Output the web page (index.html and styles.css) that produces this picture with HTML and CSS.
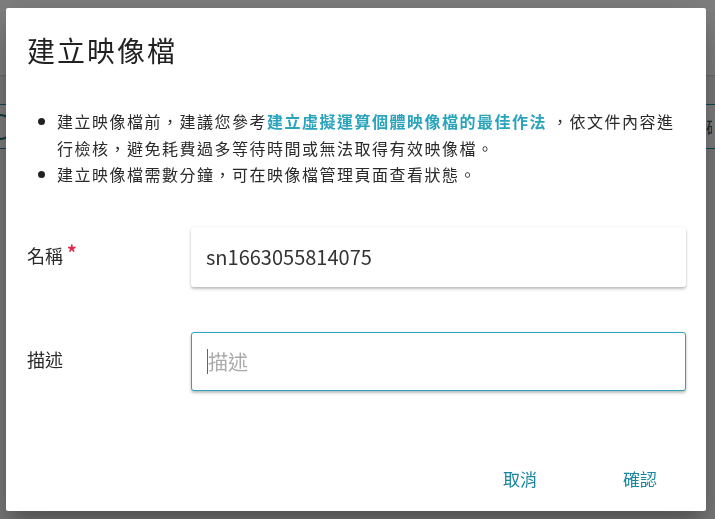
FILE: index.html
```html
<!DOCTYPE html>
<html lang="zh-Hant">
  <head>
    <meta charset="UTF-8">
    <title>建立映像檔</title>
    <link rel="stylesheet" href="styles.css">
  </head>
  <body>
    <div class="page">
      <div class="page-header"></div>
      <div class="page-search">
        <span class="search-icon"></span>
        <span class="search-action">確認</span>
      </div>
    </div>

    <div class="overlay"></div>

    <div class="dialog">
      <h2 class="dialog-title">建立映像檔</h2>

      <div class="dialog-body">
        <ul class="notes">
          <li>建立映像檔前，建議您參考<a href="#" class="notes-link">建立虛擬運算個體映像檔的最佳作法</a> ，依文件內容進行檢核，避免耗費過多等待時間或無法取得有效映像檔。</li>
          <li>建立映像檔需數分鐘，可在映像檔管理頁面查看狀態。</li>
        </ul>

        <form class="form">
          <div class="form-row">
            <label for="imageName" class="form-label">名稱 <span class="required">*</span></label>
            <input type="text" id="imageName" class="form-input" value="sn1663055814075">
          </div>
          <div class="form-row">
            <label for="imageDesc" class="form-label">描述</label>
            <div class="form-input form-input-focus">
              <span class="caret"></span><span class="placeholder">描述</span>
            </div>
          </div>
        </form>
      </div>

      <div class="dialog-actions">
        <button type="button" class="btn">取消</button>
        <button type="button" class="btn">確認</button>
      </div>
    </div>
  </body>
</html>
```

FILE: styles.css
```css
body {
  margin: 0;
  padding: 0;
  background-color: #f4f4f4;
  font-family: "Noto Sans CJK TC", "Noto Sans", sans-serif;
  color: #333;
  overflow: hidden;
}

.page {
  height: 519px;
}

.page-header {
  height: 75px;
  background-color: #fff;
  border-bottom: 1px solid #d8d8d8;
}

.page-search {
  margin-top: 28px;
  height: 43px;
  border-top: 1px solid #1d8fa8;
  border-bottom: 1px solid #1d8fa8;
  background-color: #fff;
  display: flex;
  align-items: center;
  justify-content: space-between;
  overflow: hidden;
}

.search-icon {
  width: 22px;
  height: 22px;
  margin-left: -13px;
  border: 2px solid #1d6f80;
  border-radius: 50%;
}

.search-action {
  width: 6px;
  overflow: hidden;
  white-space: nowrap;
  margin-right: 3px;
  font-size: 17px;
  color: #1a5d6d;
}

.overlay {
  position: fixed;
  top: 0;
  left: 0;
  right: 0;
  bottom: 0;
  background-color: rgba(0, 0, 0, 0.5);
}

.dialog {
  position: fixed;
  left: 6px;
  top: 8px;
  width: 700px;
  height: 503px;
  background-color: #fff;
  border-radius: 2px;
  box-shadow: 0 11px 15px -7px rgba(0,0,0,0.2), 0 24px 38px 3px rgba(0,0,0,0.14), 0 9px 46px 8px rgba(0,0,0,0.12);
  display: flex;
  flex-direction: column;
  box-sizing: border-box;
}

.dialog-title {
  margin: 0;
  padding: 22px 21px 0;
  font-size: 28px;
  line-height: 40px;
  font-weight: normal;
  color: #212121;
  letter-spacing: 2px;
}

.dialog-body {
  padding: 0 20px 0 21px;
}

.notes {
  margin: 38px 0 0;
  padding-left: 30px;
  list-style: none;
  font-size: 16px;
  line-height: 26.5px;
  letter-spacing: 1.5px;
  color: #2a2a2a;
}

.notes li {
  position: relative;
}

.notes li::before {
  content: "";
  position: absolute;
  left: -19px;
  top: 10px;
  width: 7px;
  height: 7px;
  border-radius: 50%;
  background-color: #222;
}

.notes-link {
  color: #2aa3bd;
  font-weight: bold;
  text-decoration: none;
}

.form {
  margin-top: 39px;
  display: flex;
  flex-direction: column;
  gap: 45px;
}

.form-row {
  display: flex;
  align-items: center;
}

.form-label {
  width: 164px;
  flex-shrink: 0;
  font-size: 18px;
  line-height: 24px;
  margin-top: -4px;
  color: #2a2a2a;
}

.required {
  color: #e0284a;
  font-size: 19px;
  font-weight: bold;
  line-height: 18px;
  vertical-align: top;
}

.form-input {
  flex: 1;
  height: 60px;
  box-sizing: border-box;
  border: none;
  border-radius: 3px;
  padding: 0 15px;
  font-family: "Noto Sans CJK TC", "Noto Sans", sans-serif;
  font-size: 20px;
  color: #333;
  background-color: #fff;
  box-shadow: 0 2px 3px rgba(0,0,0,0.25), 0 0 2px rgba(0,0,0,0.08);
  outline: none;
}

.form-input-focus {
  height: 59px;
  border: 1px solid #2aa5c0;
  display: flex;
  align-items: center;
}

.caret {
  width: 1px;
  height: 25px;
  background-color: #1d7f96;
}

.placeholder {
  color: #aaa;
}

.dialog-actions {
  margin-top: auto;
  padding: 0 20px 15px 0;
  display: flex;
  justify-content: flex-end;
  gap: 28px;
}

.btn {
  min-width: 92px;
  height: 36px;
  background: none;
  border: none;
  font-family: "Noto Sans CJK TC", "Noto Sans", sans-serif;
  font-size: 17px;
  color: #17869e;
  cursor: pointer;
}
```
